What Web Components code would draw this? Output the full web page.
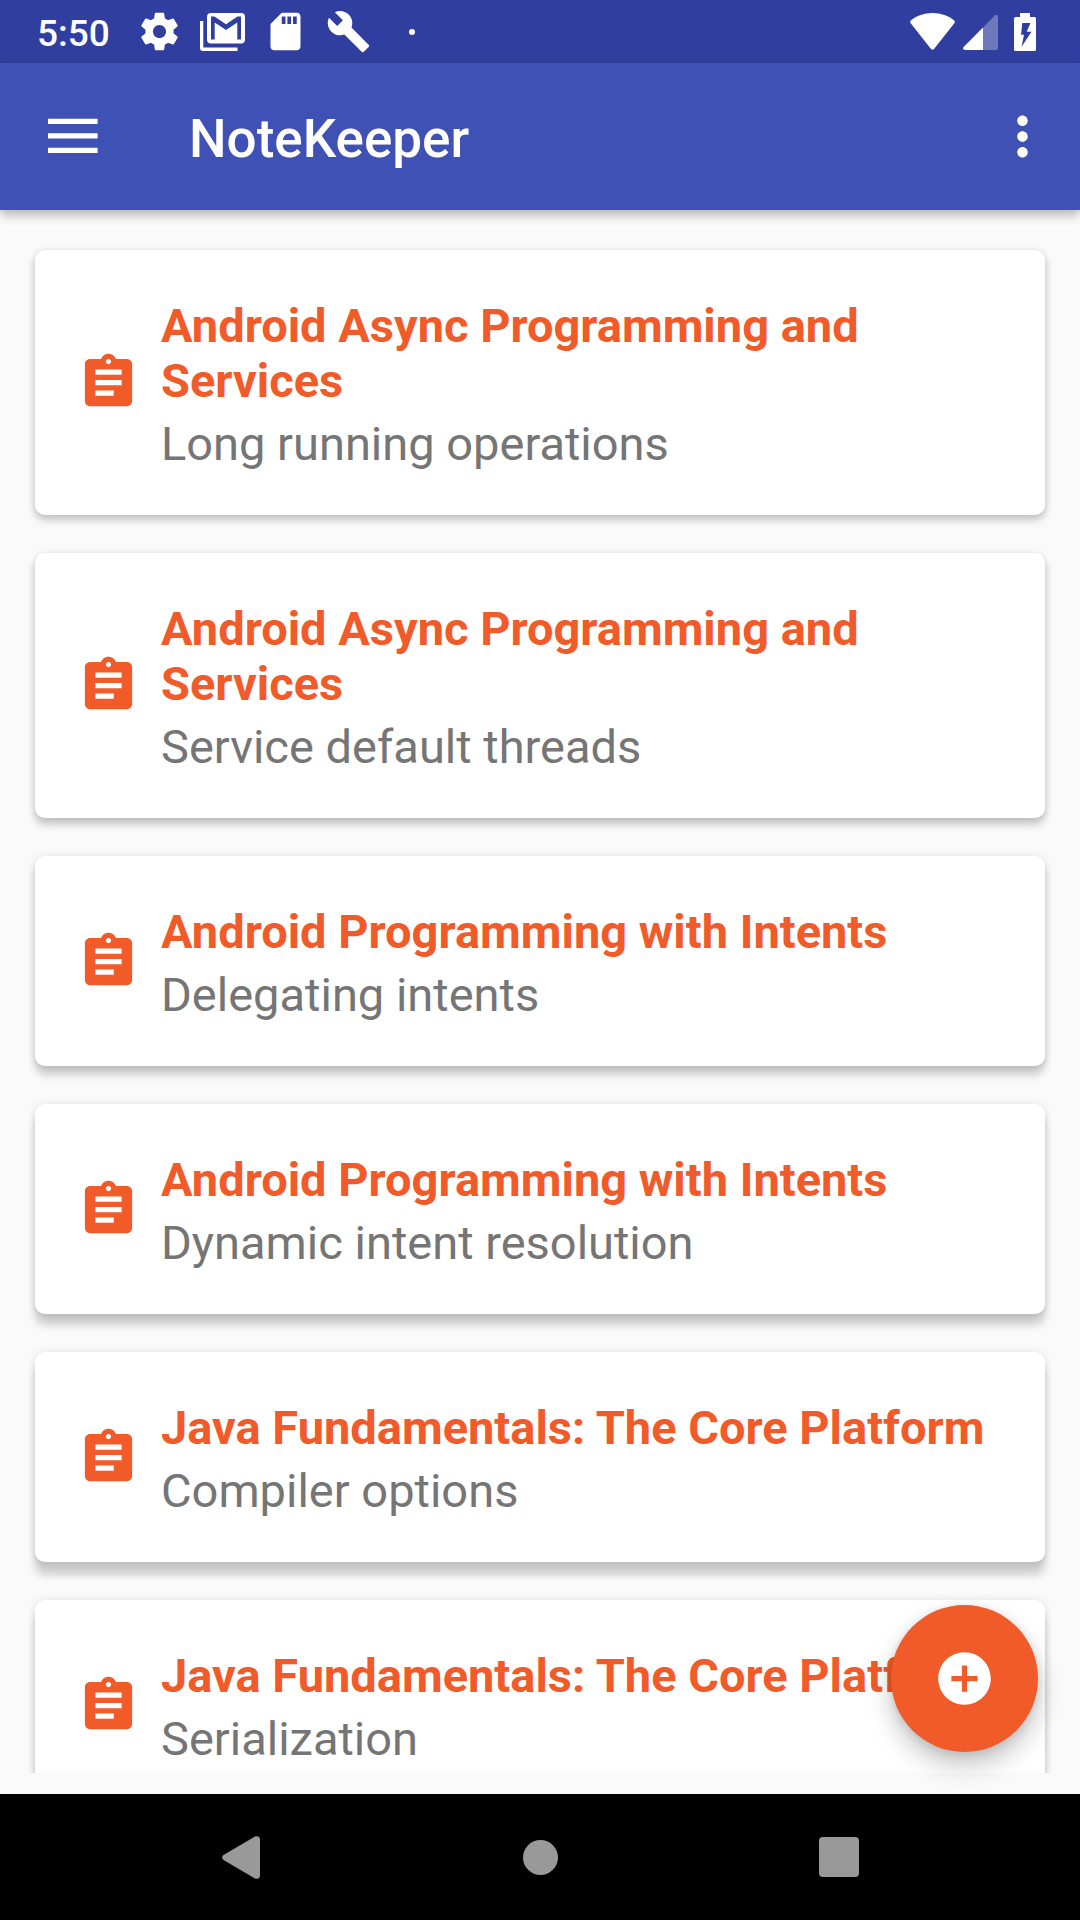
<!DOCTYPE html>
<html lang="en">
<head>
<meta charset="utf-8">
<meta name="viewport" content="width=device-width, initial-scale=1">
<title>NoteKeeper</title>
<style>
  body { margin: 0; background: #fafafa; font-family: Roboto, sans-serif; }
</style>
</head>
<body>
<note-app>
  <status-bar slot="status"></status-bar>
  <app-bar slot="bar">NoteKeeper</app-bar>
  <note-card style="--drop: 5px"><span slot="course">Android Async Programming and Services</span><span slot="note">Long running operations</span></note-card>
  <note-card style="--drop: 7px"><span slot="course">Android Async Programming and Services</span><span slot="note">Service default threads</span></note-card>
  <note-card style="--drop: 9px"><span slot="course">Android Programming with Intents</span><span slot="note">Delegating intents</span></note-card>
  <note-card style="--drop: 11px"><span slot="course">Android Programming with Intents</span><span slot="note">Dynamic intent resolution</span></note-card>
  <note-card style="--drop: 13px"><span slot="course">Java Fundamentals: The Core Platform</span><span slot="note">Compiler options</span></note-card>
  <note-card style="--drop: 13px"><span slot="course">Java Fundamentals: The Core Platform</span><span slot="note">Serialization</span></note-card>
  <add-button slot="fab"></add-button>
  <system-nav slot="nav"></system-nav>
</note-app>

<script>
const component = (name, html) => {
  const template = document.createElement('template');
  template.innerHTML = html;
  customElements.define(name, class extends HTMLElement {
    constructor() {
      super();
      this.attachShadow({ mode: 'open' }).append(template.content.cloneNode(true));
    }
  });
};

const buttonReset = `
  button { margin: 0; padding: 0; border: 0; background: none; color: inherit; font: inherit; cursor: pointer; }
  svg { display: block; fill: currentColor; }
`;

component('note-app', `
  <style>
    :host { display: flex; flex-direction: column; height: 100vh; }
    .content { position: relative; flex: 1; min-height: 0; display: flex; flex-direction: column; }
    main { flex: 1; min-height: 0; margin: 21px; overflow-y: auto; scrollbar-width: none; }
    .fab { position: absolute; right: 42px; bottom: 42px; }
  </style>
  <slot name="status"></slot>
  <slot name="bar"></slot>
  <div class="content">
    <main><slot></slot></main>
    <div class="fab"><slot name="fab"></slot></div>
  </div>
  <slot name="nav"></slot>
`);

component('status-bar', `
  <style>
    :host { display: flex; align-items: center; justify-content: space-between; height: 63px;
            padding: 0 44px 0 37px; background: #303f9f; color: #fff; }
    svg { display: block; fill: currentColor; }
    .left, .right { display: flex; align-items: center; }
    time { min-width: 91px; font-size: 37px; line-height: 43px; font-weight: 500; padding-top: 3px; }
    .slot { width: 63px; display: flex; justify-content: center; }
    .right { gap: 8px; }
    .battery { margin-left: 8px; }
  </style>
  <div class="left">
    <time>5:50</time>
    <div class="slot"><svg width="45" height="45" viewBox="0 0 24 24"><path d="M19.43 12.98c.04-.32.07-.64.07-.98s-.03-.66-.07-.98l2.11-1.65c.19-.15.24-.42.12-.64l-2-3.46c-.12-.22-.39-.3-.61-.22l-2.49 1c-.52-.4-1.08-.73-1.69-.98l-.38-2.65C14.46 2.18 14.25 2 14 2h-4c-.25 0-.46.18-.49.42l-.38 2.65c-.61.25-1.17.59-1.69.98l-2.49-1c-.23-.09-.49 0-.61.22l-2 3.46c-.13.22-.07.49.12.64l2.11 1.65c-.04.32-.07.65-.07.98s.03.66.07.98l-2.11 1.65c-.19.15-.24.42-.12.64l2 3.46c.12.22.39.3.61.22l2.49-1c.52.4 1.08.73 1.69.98l.38 2.65c.03.24.24.42.49.42h4c.25 0 .46-.18.49-.42l.38-2.65c.61-.25 1.17-.59 1.69-.98l2.49 1c.23.09.49 0 .61-.22l2-3.46c.12-.22.07-.49-.12-.64l-2.11-1.65zM12 15.5c-1.93 0-3.5-1.57-3.5-3.5s1.57-3.5 3.5-3.5 3.5 1.57 3.5 3.5-1.57 3.5-3.5 3.5z"/></svg></div>
    <div class="slot"><svg width="45" height="38" viewBox="0 0 45 38"><path fill-rule="evenodd" d="M11 0H41a4 4 0 0 1 4 4V26.500a4 4 0 0 1-4 4H11a4 4 0 0 1-4-4V4a4 4 0 0 1 4-4ZM11 3.500V26.500H14.700V9.500L26 17L37.300 9.500V26.500H41V3.500H37.500L26 11.300L14.500 3.500Z"/><path d="M0 8H3.300V34.500H37.500V38H3a3 3 0 0 1-3-3Z"/></svg></div>
    <div class="slot"><svg width="45" height="45" viewBox="0 0 24 24"><path d="M18 2h-8L4.020 8 4 20c0 1.100.9 2 2 2h12c1.100 0 2-.9 2-2V4c0-1.100-.9-2-2-2zm-6 6h-2V4h2v4zm3 0h-2V4h2v4zm3 0h-2V4h2v4z"/></svg></div>
    <div class="slot"><svg width="45" height="45" viewBox="0 0 24 24"><path d="M22.700 19l-9.100-9.100c.9-2.300.4-5-1.500-6.900-2-2-5-2.400-7.400-1.300L9 6 6 9 1.600 4.700C.4 7.100.9 10.100 2.900 12.100c1.900 1.900 4.600 2.400 6.900 1.500l9.100 9.100c.4.4 1 .4 1.400 0l2.300-2.300c.5-.4.5-1.100.1-1.400z"/></svg></div>
    <div class="slot"><svg width="6" height="6" viewBox="0 0 6 6"><circle cx="3" cy="3" r="3"/></svg></div>
  </div>
  <div class="right">
    <svg width="45" height="37" viewBox="0 0 45 37"><path d="M22.500 0C31 0 38.500 3 44 7.300Q45.300 8.500 44.500 10L24 36Q22.500 37.500 21 36L.5 10Q-.3 8.500 1 7.300C6.500 3 14 0 22.500 0Z"/></svg>
    <svg width="35" height="36" viewBox="0 0 35 36"><path opacity=".3" d="M20 13.500L32 1.200Q35 0 35 2.500V34Q35 36 33 36H20Z"/><path d="M20 13.500V36H2Q-1 35 .6 33Z"/></svg>
    <svg class="battery" width="22" height="38" viewBox="0 0 22 38"><path fill-rule="evenodd" d="M6 0H16V4H20.500Q22 4 22 5.500V36.500Q22 38 20.500 38H1.500Q0 38 0 36.500V5.500Q0 4 1.500 4H6ZM8.300 10L7 21.700H10L7.600 33.700L17.500 18.700H12.700L16.500 10Z"/></svg>
  </div>
`);

component('app-bar', `
  <style>
    ${buttonReset}
    :host { position: relative; z-index: 1; display: flex; align-items: center; height: 147px; background: #3f51b5; color: #fff;
            box-shadow: 0 5px 10px rgba(0, 0, 0, .28); }
    .menu { display: flex; align-items: center; width: 189px; height: 147px; padding-left: 42px; }
    h1 { flex: 1; margin: 0; font-size: 53px; line-height: 62px; font-weight: 500; padding-top: 5px; }
    .more { padding: 0 26px; height: 147px; }
  </style>
  <button class="menu" aria-label="Open navigation drawer"><svg width="63" height="63" viewBox="0 0 63 63"><path d="M6 13.700H55.600V19H6ZM6 28.300H55.600V33.600H6ZM6 42.800H55.600V48.100H6Z"/></svg></button>
  <h1><slot></slot></h1>
  <button class="more" aria-label="More options"><svg width="63" height="63" viewBox="0 0 24 24"><path d="M12 8c1.100 0 2-.9 2-2s-.9-2-2-2-2 .9-2 2 .9 2 2 2zm0 2c-1.100 0-2 .9-2 2s.9 2 2 2 2-.9 2-2-.9-2-2-2zm0 6c-1.100 0-2 .9-2 2s.9 2 2 2 2-.9 2-2-.9-2-2-2z"/></svg></button>
`);

component('note-card', `
  <style>
    /* Each list row clips its own card's shadow. */
    :host { display: block; padding: 19px 14px; overflow: hidden; }
    article { display: flex; align-items: center; gap: 21px; padding: 0 42px; border-radius: 10px; background: #fff;
              box-shadow: 0 var(--drop) 9px rgba(0, 0, 0, .18), 0 1px 9px rgba(0, 0, 0, .12); }
    svg { display: block; flex: none; fill: #f15a29; }
    .text { flex: 1; padding: 48px 0 44px; display: flex; flex-direction: column; gap: 8px; font-size: 47px; line-height: 55px; }
    h2 { margin: 0; font-size: inherit; font-weight: 700; color: #f15a29; }
    p { margin: 0; color: #757575; }
  </style>
  <article>
    <svg width="63" height="63" viewBox="0 0 24 24"><path d="M19 3h-4.180C14.400 1.840 13.300 1 12 1c-1.300 0-2.400.84-2.820 2H5c-1.100 0-2 .9-2 2v14c0 1.100.9 2 2 2h14c1.100 0 2-.9 2-2V5c0-1.100-.9-2-2-2zm-7 0c.55 0 1 .45 1 1s-.45 1-1 1-1-.45-1-1 .45-1 1-1zm2 14H7v-2h7v2zm3-4H7v-2h10v2zm0-4H7V7h10v2z"/></svg>
    <div class="text">
      <h2><slot name="course"></slot></h2>
      <p><slot name="note"></slot></p>
    </div>
  </article>
`);

component('add-button', `
  <style>
    ${buttonReset}
    :host { display: block; }
    button { display: flex; align-items: center; justify-content: center; width: 147px; height: 147px; border-radius: 50%;
             background: #f15a29; color: #fff; box-shadow: 0 14px 26px rgba(0, 0, 0, .22), 0 2px 10px rgba(0, 0, 0, .12); }
  </style>
  <button aria-label="Add note"><svg width="63" height="63" viewBox="0 0 24 24"><path d="M12 2C6.480 2 2 6.480 2 12s4.480 10 10 10 10-4.480 10-10S17.520 2 12 2zm5 11h-4v4h-2v-4H7v-2h4V7h2v4h4v2z"/></svg></button>
`);

component('system-nav', `
  <style>
    ${buttonReset}
    :host { display: block; background: #000; color: #999; }
    nav { display: flex; height: 126px; padding: 0 92px; }
    button { flex: 1; display: flex; align-items: center; justify-content: center; }
  </style>
  <nav aria-label="System">
    <button aria-label="Back"><svg width="38" height="43" viewBox="0 0 38 43"><path d="M1.500 19L33 .6Q38-1 38 4V39Q38 44 33 42.400L1.500 24Q-1.300 21.500 1.500 19Z"/></svg></button>
    <button aria-label="Home"><svg width="35" height="35" viewBox="0 0 35 35"><circle cx="17.500" cy="17.500" r="17.500"/></svg></button>
    <button aria-label="Overview"><svg width="40" height="40" viewBox="0 0 40 40"><rect width="40" height="40" rx="4"/></svg></button>
  </nav>
`);
</script>
</body>
</html>
